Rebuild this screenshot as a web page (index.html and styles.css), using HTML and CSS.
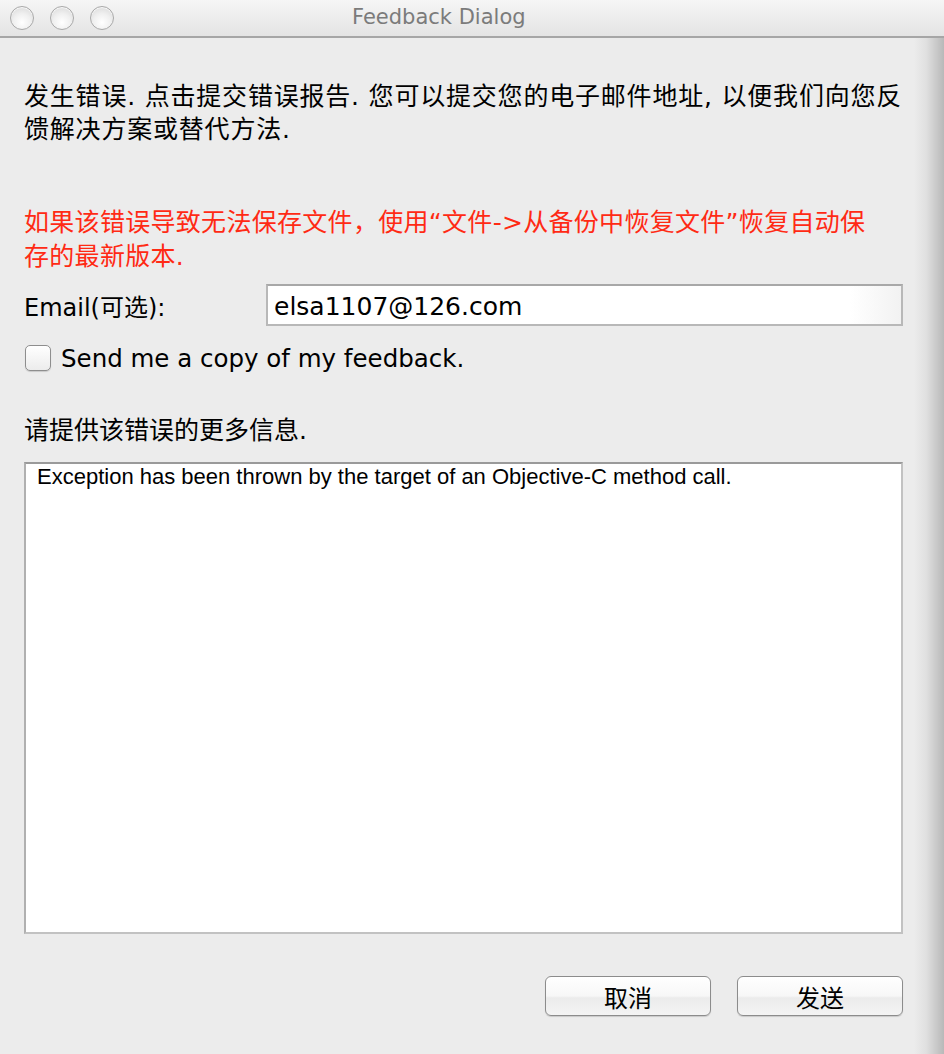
FILE: index.html
```html
<!DOCTYPE html>
<html lang="zh-CN">
<head>
    <meta charset="UTF-8">
    <title>Feedback Dialog</title>
    <link rel="stylesheet" href="styles.css">
</head>
<body>
    <div class="window">
        <!-- Barra de título -->
        <div class="titlebar">
            <div class="lights">
                <span class="light"></span>
                <span class="light"></span>
                <span class="light"></span>
            </div>
            <div class="title">Feedback Dialog</div>
        </div>

        <div class="content">
            <p class="intro">发生错误. 点击提交错误报告. 您可以提交您的电子邮件地址, 以便我们向您反馈解决方案或替代方法.</p>

            <p class="warning">如果该错误导致无法保存文件，使用“文件-&gt;从备份中恢复文件”恢复自动保存的最新版本.</p>

            <div class="email-row">
                <label for="email">Email(可选):</label>
                <input type="text" id="email" value="elsa1107@126.com">
            </div>

            <label class="copy-row">
                <span class="checkbox"></span>
                <span>Send me a copy of my feedback.</span>
            </label>

            <div class="more-label">请提供该错误的更多信息.</div>

            <div class="details">Exception has been thrown by the target of an Objective-C method call.</div>

            <div class="buttons">
                <button class="btn">取消</button>
                <button class="btn">发送</button>
            </div>
        </div>
        <div class="edge-shadow"></div>
    </div>
</body>
</html>
```

FILE: styles.css
```css
body {
    margin: 0;
    background-color: #ececec;
    font-family: "DejaVu Sans", "Noto Sans CJK SC", sans-serif;
    color: #000;
}
.window {
    position: relative;
    width: 944px;
    height: 1054px;
    overflow: hidden;
    background-color: #ececec;
}
.titlebar {
    height: 36px;
    display: flex;
    align-items: center;
    background: linear-gradient(#f6f6f6, #e4e4e4);
    border-bottom: 2px solid #a6a6a6;
}
.lights {
    display: flex;
    gap: 16px;
    padding-left: 10px;
}
.light {
    width: 22px;
    height: 22px;
    border-radius: 50%;
    border: 1px solid #a9a9a9;
    background: radial-gradient(circle at 50% 70%, #ffffff 0%, #f0f0f0 45%, #d4d4d4 100%);
    box-shadow: inset 0 1px 1px rgba(255, 255, 255, 0.9);
}
.title {
    margin-left: 238px;
    font-family: "DejaVu Sans", sans-serif;
    font-size: 21px;
    color: #7b7b7b;
    padding-bottom: 2px;
}
.content {
    padding: 42px 41px 0 24px;
    display: flex;
    flex-direction: column;
}
.intro {
    margin: 0;
    font-family: "DejaVu Sans", "Noto Sans CJK SC", sans-serif;
    font-size: 25px;
    line-height: 33px;
    letter-spacing: 0.8px;
}
.warning {
    margin: 60px 0 0 0;
    font-family: "DejaVu Sans", "Noto Sans CJK SC", sans-serif;
    font-size: 25px;
    line-height: 34px;
    letter-spacing: 0.3px;
    color: #ff2a14;
    padding-right: 14px;
}
.email-row {
    margin-top: 10px;
    display: flex;
    align-items: center;
}
.email-row label {
    width: 242px;
    font-size: 24px;
}
.email-row input {
    flex: 1;
    height: 42px;
    box-sizing: border-box;
    border: 2px solid #b8b8b8;
    border-top-color: #a8a8a8;
    background: linear-gradient(90deg, #ffffff 92%, #f2f2f2);
    font-family: "DejaVu Sans", sans-serif;
    font-size: 25px;
    padding: 2px 6px 0 6px;
    color: #000;
    outline: none;
}
.copy-row {
    margin-top: 19px;
    display: flex;
    align-items: center;
    gap: 10px;
    font-size: 24.5px;
    height: 26px;
}
.checkbox {
    width: 24px;
    height: 24px;
    border: 1px solid #8e8e8e;
    border-radius: 5px;
    background: linear-gradient(#ffffff, #ececec);
    box-shadow: 0 1px 1px rgba(0, 0, 0, 0.15);
    margin-left: 1px;
}
.more-label {
    margin-top: 43px;
    font-family: "DejaVu Sans", "Noto Sans CJK SC", sans-serif;
    font-size: 25px;
    line-height: 34px;
}
.details {
    margin-top: 14px;
    height: 472px;
    box-sizing: border-box;
    background-color: #fff;
    border: 2px solid #c2c2c2;
    border-top-color: #9a9a9a;
    border-left-color: #b0b0b0;
    padding: 0 11px;
    font-family: "Liberation Sans", sans-serif;
    font-size: 22px;
    line-height: 26px;
}
.buttons {
    margin-top: 42px;
    display: flex;
    justify-content: flex-end;
    gap: 26px;
}
.btn {
    width: 166px;
    height: 40px;
    border: 1px solid #8c8c8c;
    border-radius: 6px;
    background: linear-gradient(#ffffff 0%, #f7f7f7 50%, #ebebeb 55%, #f4f4f4 100%);
    box-shadow: 0 1px 1px rgba(0, 0, 0, 0.15);
    font-family: "Noto Sans CJK SC", sans-serif;
    font-size: 24px;
    color: #000;
    padding: 0;
}
.edge-shadow {
    position: absolute;
    top: 38px;
    right: 0;
    width: 30px;
    bottom: 0;
    background: linear-gradient(90deg, rgba(0, 0, 0, 0), rgba(0, 0, 0, 0.05) 40%, rgba(0, 0, 0, 0.22));
    pointer-events: none;
}
```
